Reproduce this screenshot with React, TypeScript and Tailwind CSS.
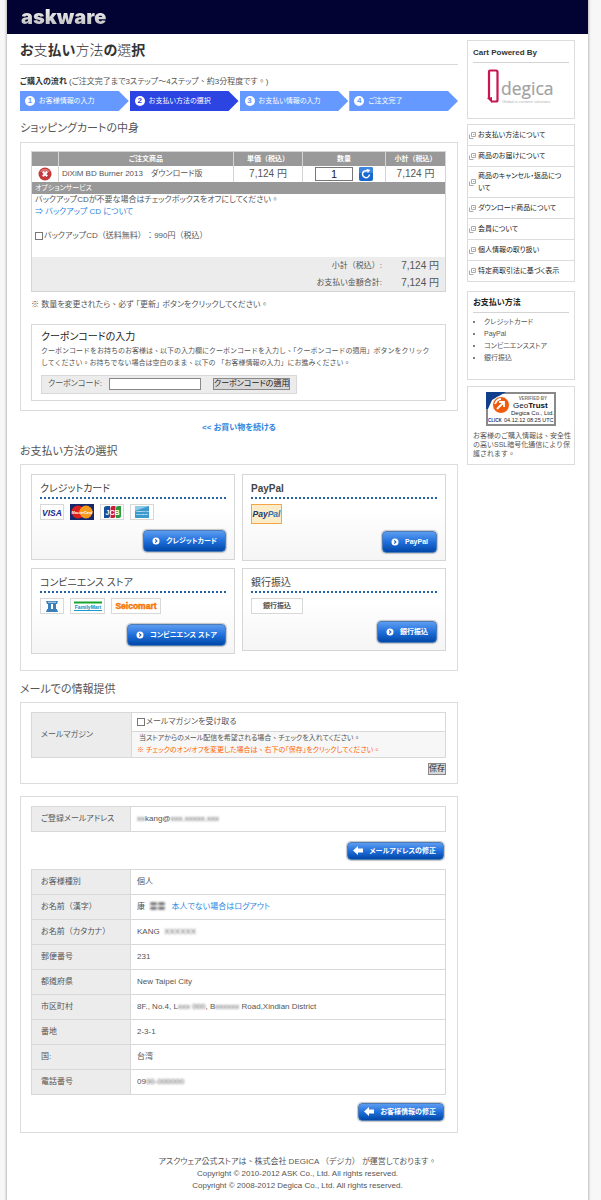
import React, { useState } from "react";
import clsx from "clsx";

const steps = ["お客様情報の入力", "お支払い方法の選択", "お支払い情報の入力", "ご注文完了"];

const guideLinks = [
  "お支払い方法について",
  "商品のお届けについて",
  "商品のキャンセル・返品について",
  "ダウンロード商品について",
  "会員について",
  "個人情報の取り扱い",
  "特定商取引法に基づく表示",
];

const customerRows: { label: string; value: React.ReactNode }[] = [
  { label: "お客様種別", value: "個人" },
  {
    label: "お名前（漢字）",
    value: (
      <>
        康 &nbsp;<Masked>〓〓</Masked>
        <a href="#logout" className="ml-[6px] text-[#2f86e0]">
          本人でない場合はログアウト
        </a>
      </>
    ),
  },
  { label: "お名前（カタカナ）", value: <>KANG &nbsp;<Masked>XXXXXX</Masked></> },
  { label: "郵便番号", value: "231" },
  { label: "都道府県", value: "New Taipei City" },
  {
    label: "市区町村",
    value: (
      <>
        8F., No.4, L<Masked>xxx 000</Masked>, B<Masked>xxxxxx</Masked> Road,Xindian District
      </>
    ),
  },
  { label: "番地", value: "2-3-1" },
  { label: "国:", value: "台湾" },
  { label: "電話番号", value: <>09<Masked>00-000000</Masked></> },
];

// private values stay unreadable
function Masked({ children }: { children: React.ReactNode }) {
  return <span className="select-none blur-[1px]">{children}</span>;
}

// kana is set proportionally, punctuation and brackets keep the full width
function Jp({ children }: { children: string }) {
  return (
    <>
      {children.split(/([、。（）])/).map((part, i) =>
        i % 2 ? (
          <span key={i} className="[font-feature-settings:normal]">{part}</span>
        ) : (
          part
        )
      )}
    </>
  );
}

function Panel({ className, children }: { className?: string; children: React.ReactNode }) {
  return <section className={clsx("border border-[#dcdcdc] pl-[10px] pr-[11px]", className)}>{children}</section>;
}

function SectionTitle({ className, children }: { className?: string; children: React.ReactNode }) {
  return <h2 className={clsx("text-[11px] leading-4 text-[#555]", className)}>{children}</h2>;
}

function BlueButton({ back, children }: { back?: boolean; children: React.ReactNode }) {
  return (
    <button
      type="button"
      className={clsx(
        "flex items-center whitespace-nowrap rounded border border-[#4b7cb8] bg-linear-to-b from-[#5b9cf0] via-[#1f6fdc] to-[#0148a8] text-[7px] font-bold text-white shadow-[0_0_1px_1px_#c4c4c4]",
        back ? "h-[18px] gap-[6px] pl-[5px] pr-[7px]" : "h-[22px] gap-[6px] pl-2 pr-2"
      )}
    >
      {back ? (
        <svg className="h-[9px] w-[10px]" viewBox="0 0 10 9" fill="#fff">
          <path d="M0 4.5 5 0v2.5h5v4H5V9z" />
        </svg>
      ) : (
        <svg className="h-2 w-2" viewBox="0 0 8 8">
          <circle cx="4" cy="4" r="3.5" fill="#fff" />
          <path d="m3.2 2.3 1.7 1.7-1.7 1.7" fill="none" stroke="#1f5fc0" strokeWidth="1.1" />
        </svg>
      )}
      <span>{children}</span>
    </button>
  );
}

function PayCard({ title, bold, icons, button, tight }: { title: string; bold?: boolean; icons: React.ReactNode; button: string; tight?: boolean }) {
  return (
    <div className="border border-[#d6d6d6] bg-linear-to-b from-white from-40% to-[#f5f5f5] px-2 pb-[7px] pt-[5px]">
      <h3 className={clsx("h-[19px] border-b-2 border-dotted border-[#2563a5] text-[10px] leading-[17px] text-[#444]", bold && "font-bold")}>
        {title}
      </h3>
      <div className="mt-[5px] flex items-start gap-[6px]">{icons}</div>
      <div className={clsx("flex justify-end", tight ? "mt-[7px]" : "mt-[10px]")}>
        <BlueButton>{button}</BlueButton>
      </div>
    </div>
  );
}

function Badge({ className, children }: { className?: string; children: React.ReactNode }) {
  return <span className={clsx("flex h-4 items-center justify-center border border-[#d8d8d8] bg-white", className)}>{children}</span>;
}

function CardLogos() {
  return (
    <>
      <Badge className="w-6">
        <svg className="h-[14px] w-[22px]" viewBox="0 0 22 14">
          <text x="11" y="10.5" textAnchor="middle" fontFamily="Liberation Sans" fontSize="8.5" fontWeight="bold" fontStyle="italic" fill="#1b2a8c">VISA</text>
        </svg>
      </Badge>
      <svg className="h-4 w-6" viewBox="0 0 24 16">
        <rect width="24" height="16" fill="#17296b" />
        <circle cx="8" cy="8" r="6.5" fill="#dc1f1f" />
        <circle cx="16" cy="8" r="6.5" fill="#f79a1c" />
        <text x="12" y="9.5" textAnchor="middle" fontFamily="Liberation Sans" fontSize="3.8" fontWeight="bold" fontStyle="italic" fill="#fff">MasterCard</text>
      </svg>
      <Badge className="w-6">
        <svg className="h-[14px] w-[18px]" viewBox="0 0 18 14">
          <path d="M4 1h3v10q0 2-2 2H1V3q0-2 3-2" fill="#16509b" />
          <path d="M9.800 1h2.700v10q0 2-2 2H7.500V3q0-2 2.300-2" fill="#c71f37" />
          <path d="M15 1h3v10q0 2-2 2h-3V3q0-2 2-2" fill="#2a9a3c" />
          <text x="9.5" y="9.500" textAnchor="middle" fontFamily="Liberation Sans" fontSize="7" fontWeight="bold" fill="#fff">JCB</text>
        </svg>
      </Badge>
      <Badge className="w-6">
        <svg className="h-[14px] w-[14px]" viewBox="0 0 14 14">
          <rect x="0" y="1" width="14" height="12" fill="#3c9bce" />
          <path d="M0 1h14L0 6z" fill="#8fcbe6" />
          <text x="7" y="7" textAnchor="middle" fontFamily="Liberation Sans" fontSize="2.400" fontWeight="bold" fill="#fff">AMERICAN</text>
          <text x="7" y="10" textAnchor="middle" fontFamily="Liberation Sans" fontSize="2.400" fontWeight="bold" fill="#fff">EXPRESS</text>
        </svg>
      </Badge>
    </>
  );
}

function StoreLogos() {
  return (
    <>
      <Badge className="w-6">
        <svg className="h-3 w-[14px]" viewBox="0 0 14 12">
          <path d="M1 1h12l-1 3H2zM3 4h3v5H3zM8 4h3v5H8zM2 9h10l1 3H1z" fill="#3a7fb8" />
          <path d="M3 2.300h8" stroke="#b6d8ee" />
        </svg>
      </Badge>
      <Badge className="w-[35px]">
        <svg className="h-[14px] w-[30px]" viewBox="0 0 30 14">
          <path d="M1 3.500h28" stroke="#18a32c" strokeWidth="2" />
          <path d="M1 11.500h28" stroke="#1a9bc9" />
          <text x="15" y="9.500" textAnchor="middle" fontFamily="Liberation Sans" fontSize="5" fontWeight="bold" fill="#118bbb">FamilyMart</text>
        </svg>
      </Badge>
      <Badge className="w-[50px]">
        <svg className="h-[14px] w-[46px]" viewBox="0 0 46 14">
          <text x="23" y="10" textAnchor="middle" fontFamily="Liberation Sans" fontSize="8.500" fontWeight="bold" fill="#f47a0c" stroke="#f47a0c" strokeWidth=".5">Seicomart</text>
        </svg>
      </Badge>
    </>
  );
}

function DegicaLogo() {
  return (
    <svg className="mx-auto mt-[6px] h-[36px] w-[70px]" viewBox="0 0 70 36" role="img" aria-label="degica">
      <path d="M3 30V2.500q0-1 1-1h6q1.500 0 1.500 1.500v28q0 1.500-1.500 1.500H5.500" fill="none" stroke="#c8164f" strokeWidth="2.200" />
      <path d="m1 29 5 5V28z" fill="#c8164f" />
      <text x="15" y="26" fontFamily="Open Sans" fontSize="17.500" fill="#a2a2a2" stroke="#a2a2a2" strokeWidth=".2">degica</text>
      <text x="16" y="34" fontFamily="Liberation Sans" fontSize="4.200" fill="#b5b5b5">Global e-content solutions</text>
    </svg>
  );
}

function GeoTrustSeal() {
  return (
    <svg className="mx-auto h-[34px] w-[70px]" viewBox="0 0 70 34" fontFamily="Liberation Sans" role="img" aria-label="GeoTrust">
      <rect x="1" y="1" width="68" height="32" fill="#fff" stroke="#8a8a8a" strokeWidth="2" />
      <path d="M0 0h20L6 8 2 17H0z" fill="#123f8c" />
      <circle cx="15" cy="13" r="8.500" fill="#ef5b0c" stroke="#fff" />
      <path d="m11 17 6-6m-4-1h5v5M9 12q2-5 6-5" fill="none" stroke="#fff" strokeWidth="1.800" />
      <text x="47" y="8" textAnchor="middle" fontSize="4.500" fontWeight="bold" fill="#777">VERIFIED BY</text>
      <text x="27" y="15.500" fontSize="8" fill="#111">Geo<tspan fontWeight="bold">Trust</tspan></text>
      <text x="25" y="23" fontSize="6" fill="#222">Degica Co., Ltd.</text>
      <text x="2" y="29.500" fontSize="4.500" fontWeight="bold" fill="#123f8c">CLICK</text>
      <text x="18" y="29.500" fontSize="5.500" fill="#222">04.12.12 08:25 UTC</text>
    </svg>
  );
}

function CartTable() {
  const [qty, setQty] = useState("1");
  return (
    <table className="w-full table-fixed border-collapse border border-[#d4d4d4]">
      <colgroup>
        <col className="w-[27px]" />
        <col />
        <col className="w-[69px]" />
        <col className="w-[83px]" />
        <col className="w-[60px]" />
      </colgroup>
      <thead>
        <tr className="h-[14px] bg-[#999] text-center text-[7px] leading-3 text-white">
          <th className="border-r border-[#d4d4d4]" />
          <th className="border-r border-[#d4d4d4]">ご注文商品</th>
          <th className="border-r border-[#d4d4d4]"><Jp>単価（税込）</Jp></th>
          <th className="border-r border-[#d4d4d4]">数量</th>
          <th><Jp>小計（税込）</Jp></th>
        </tr>
      </thead>
      <tbody>
        <tr className="h-4 text-center">
          <td className="border-r border-[#d4d4d4]">
            <button type="button" aria-label="削除" className="mx-auto block">
              <svg className="h-[14px] w-[14px]" viewBox="0 0 14 14">
                <circle cx="7" cy="7" r="6.500" fill="#c4373a" />
                <path d="M2 5a5.500 5.500 0 0 1 10 0z" fill="#da7472" />
                <path d="m4.800 4.800 4.400 4.400m0-4.400L4.800 9.200" stroke="#fff" strokeWidth="2" />
              </svg>
            </button>
          </td>
          <td className="border-r border-[#d4d4d4] pl-[3px] text-left">DiXiM BD Burner 2013　ダウンロード版</td>
          <td className="border-r border-[#d4d4d4] text-[10px] leading-[14px]">7,124 円</td>
          <td className="border-r border-[#d4d4d4]">
            <div className="flex items-center justify-center gap-[6px]">
              <input
                aria-label="数量"
                value={qty}
                onChange={(e) => setQty(e.target.value)}
                className="h-[14px] w-[38px] border border-[#777] text-center text-[11px] text-[#222]"
              />
              <button type="button" aria-label="更新">
                <svg className="h-[14px] w-[14px]" viewBox="0 0 14 14">
                  <rect width="14" height="14" rx="2" fill="#1767cf" />
                  <path d="M0 2q0-2 2-2h10q2 0 2 2v4H0z" fill="#3d86e0" />
                  <path d="M10.500 7.500A3.500 3.500 0 1 1 8.500 4" fill="none" stroke="#fff" strokeWidth="1.500" />
                  <path d="M7.500 1.800 11.300 3l-2.500 3z" fill="#fff" />
                </svg>
              </button>
            </div>
          </td>
          <td className="text-[10px] leading-[14px]">7,124 円</td>
        </tr>
        <tr className="h-3 bg-[#999] text-[7px] leading-[10px] text-white">
          <td colSpan={5} className="pl-[3px]">オプションサービス</td>
        </tr>
        <tr className="h-[63px] align-top">
          <td colSpan={5} className="pl-[3px]">
            <p><Jp>バックアップCDが不要な場合はチェックボックスをオフにしてください。</Jp></p>
            <a href="#backup" className="text-[#2f86e0]">⇒ バックアップ CD について</a>
            <label className="mt-3 flex items-center gap-px">
              <input type="checkbox" className="h-2 w-2 appearance-none border border-[#777] bg-white" />
              <span><Jp>バックアップCD（送料無料） ： 990円（税込）</Jp></span>
            </label>
          </td>
        </tr>
        <tr className="bg-[#ececec]">
          <td colSpan={5} className="pr-[6px]">
            <dl className="grid grid-cols-[1fr_57px] text-right leading-[17px]">
              <dt><Jp>小計（税込）:</Jp></dt>
              <dd className="text-[10px]">7,124 円</dd>
              <dt>お支払い金額合計:</dt>
              <dd className="text-[10px]">7,124 円</dd>
            </dl>
          </td>
        </tr>
      </tbody>
    </table>
  );
}

function Sidebar() {
  return (
    <aside className="pt-[6px]">
      <div className="h-[79px] border border-[#dcdcdc] px-[5px] pt-[6px]">
        <h2 className="border-b border-[#d4d4d4] pb-[3px] font-bold text-[#333]">Cart Powered By</h2>
        <DegicaLogo />
      </div>
      <ul className="mt-[5px] border border-b-0 border-[#dcdcdc] text-[7px] text-[#222]">
        {guideLinks.map((label) => (
          <li key={label} className="border-b border-[#dcdcdc]">
            <a href="#guide" className="flex min-h-[20px] items-center gap-[2px] py-[3px] pl-px pr-[10px]">
              <svg className="h-[7px] w-[7px] shrink-0" viewBox="0 0 7 7" fill="none" stroke="#aaa">
                <path d="M2.500.5h4v4h-4zM.5 2.500v4h4M4 2.500h1.500" />
              </svg>
              <span>{label}</span>
            </a>
          </li>
        ))}
      </ul>
      <div className="mt-[9px] h-[89px] border border-[#dcdcdc] px-[5px] pt-[5px]">
        <h2 className="mb-[3px] border-b border-[#d4d4d4] pb-[3px] font-bold text-[#222]">お支払い方法</h2>
        <ul className="list-disc pl-[11px] text-[7px] leading-3">
          <li>クレジットカード</li>
          <li>PayPal</li>
          <li>コンビニエンスストア</li>
          <li>銀行振込</li>
        </ul>
      </div>
      <div className="mt-[6px] border border-[#dcdcdc] pb-[6px] pt-[5px]">
        <GeoTrustSeal />
        <p className="mt-[5px] pl-[5px] pr-px text-[7px] leading-[9px] [font-feature-settings:normal]">
          お客様のご購入情報は、安全性の高いSSL暗号化通信により保護されます。
        </p>
      </div>
    </aside>
  );
}

export default function App() {
  return (
    <div className="bg-[#f7f7f7] pl-[7px] pr-[13px] font-['Liberation_Sans','Noto_Sans_CJK_TC',sans-serif] text-[8px] leading-3 text-[#555] [font-feature-settings:'palt']">
      <div className="bg-white pb-2 shadow-[0_0_2px_1px_#bbb]">
        <header className="flex h-[34px] items-center bg-[#020233] pl-[14px]">
          <a href="#top" className="bg-linear-to-b from-white to-[#b5b5b5] bg-clip-text font-['Inter','Liberation_Sans',sans-serif] text-[20px] font-black leading-6 text-transparent">
            askware
          </a>
        </header>

        <div className="grid grid-cols-[minmax(0,1fr)_108px] gap-[9px] px-[13px]">
          <main>
            <h1 className="border-b border-[#d8d8d8] pb-[4px] pt-[7px] text-[14px] font-bold leading-[19px] text-[#333]">
              お<span className="font-light">支</span>払い<span className="font-light">方法</span>の<span className="font-light">選</span>択
            </h1>
            <p className="mt-[11px]">
              <strong className="text-[#333]">ご購入の流れ</strong> <Jp>(ご注文完了まで3ステップ～4ステップ、約3分程度です。)</Jp>
            </p>
            <ol className="mt-[3px] grid grid-cols-4 gap-px text-[7px] text-white">
              {steps.map((step, i) => (
                <li
                  key={step}
                  className={clsx(
                    "flex h-5 items-center gap-1 pl-[5px] [clip-path:polygon(0_0,calc(100%-10px)_0,100%_50%,calc(100%-10px)_100%,0_100%)]",
                    i === 1 ? "bg-[#2b44e2]" : "bg-[#6699ff]"
                  )}
                >
                  <span className={clsx("flex h-[10px] w-[10px] items-center justify-center rounded-full bg-white text-[8px] font-bold", i === 1 ? "text-[#2b44e2]" : "text-[#6699ff]")}>
                    {i + 1}
                  </span>
                  {step}
                </li>
              ))}
            </ol>

            <SectionTitle className="mt-[9px]">ショッピングカートの中身</SectionTitle>
            <Panel className="mt-[6px] pb-[9px] pt-2">
              <CartTable />
              <p className="mt-[7px]"><Jp>※ 数量を変更されたら、必ず 「更新」 ボタンをクリックしてください。</Jp></p>
              <div className="mt-[13px] border border-[#d8d8d8] px-[9px] pb-[6px] pt-1">
                <h3 className="text-[10px] leading-4 text-[#222]">クーポンコードの入力</h3>
                <p className="text-[7px] [font-feature-settings:normal]">
                  クーポンコードをお持ちのお客様は、以下の入力欄にクーポンコードを入力し、「クーポンコードの適用」ボタンをクリックしてください。お持ちでない場合は空白のまま、以下の 「お客様情報の入力」にお進みください。
                </p>
                <div className="mt-[6px] flex h-[19px] w-fit items-center border border-[#d8d8d8] bg-[#ececec] px-[6px]">
                  <label htmlFor="coupon" className="w-[61px]">クーポンコード:</label>
                  <input id="coupon" className="h-3 w-[92px] border border-[#888] bg-white" />
                  <button type="button" className="ml-3 h-3 border border-[#888] bg-[#d8d8d8] leading-[10px] text-[#222]">
                    クーポンコードの適用
                  </button>
                </div>
              </div>
            </Panel>
            <p className="mt-[11px] text-center">
              <a href="#shop" className="font-bold text-[#2f86e0]">&lt;&lt; お買い物を続ける</a>
            </p>

            <SectionTitle className="mt-[9px]">お支払い方法の選択</SectionTitle>
            <Panel className="mt-[5px] pb-4 pt-[9px]">
              <div className="grid grid-cols-2 items-start gap-x-[7px] gap-y-[7px]">
                <PayCard title="クレジットカード" button="クレジットカード" icons={<CardLogos />} />
                <PayCard
                  title="PayPal"
                  bold
                  button="PayPal"
                  tight
                  icons={
                    <svg className="h-5 w-[31px]" viewBox="0 0 31 20">
                      <rect x=".5" y=".5" width="30" height="19" fill="#fdecc8" stroke="#f5a547" />
                      <text x="15.500" y="12.500" textAnchor="middle" fontFamily="Liberation Sans" fontSize="8.500" fontWeight="bold" fontStyle="italic" fill="#1b3668">
                        Pay<tspan fill="#2a75ae">Pal</tspan>
                      </text>
                    </svg>
                  }
                />
                <PayCard title="コンビニエンス ストア" button="コンビニエンス ストア" icons={<StoreLogos />} />
                <PayCard title="銀行振込" button="銀行振込" tight icons={<Badge className="w-[52px] text-[7px] font-bold">銀行振込</Badge>} />
              </div>
            </Panel>

            <SectionTitle className="mt-[10px]">メールでの情報提供</SectionTitle>
            <Panel className="mt-[5px] pb-[8px] pt-[9px]">
              <table className="w-full table-fixed border-collapse">
                <tbody>
                  <tr className="h-[19px]">
                    <th rowSpan={2} scope="row" className="w-[100px] border border-[#d8d8d8] bg-[#ececec] pl-[9px] text-left font-normal">
                      メールマガジン
                    </th>
                    <td className="border border-[#d8d8d8] pl-[5px]">
                      <label className="flex items-center gap-px">
                        <input type="checkbox" className="h-2 w-2 appearance-none border border-[#777] bg-white" />
                        メールマガジンを受け取る
                      </label>
                    </td>
                  </tr>
                  <tr className="h-[26px]">
                    <td className="border border-[#d8d8d8] bg-[#f7f7f7] pl-[5px] text-[7px]">
                      <p className="pl-[2px]"><Jp>当ストアからのメール配信を希望される場合、チェックを入れてください。</Jp></p>
                      <p className="text-[#ff6600]"><Jp>※ チェックのオン/オフを変更した場合は、右下の「保存」をクリックしてください。</Jp></p>
                    </td>
                  </tr>
                </tbody>
              </table>
              <div className="mt-[5px] flex justify-end">
                <button type="button" className="h-3 border border-[#888] bg-[#d8d8d8] leading-[10px] text-[#222]">保存</button>
              </div>
            </Panel>

            <Panel className="mt-3 pb-[11px] pt-[9px]">
              <table className="w-full table-fixed border-collapse">
                <tbody>
                  <tr className="h-[25px]">
                    <th scope="row" className="w-[99px] border border-[#d8d8d8] bg-[#ececec] pl-[9px] text-left font-normal">ご登録メールアドレス</th>
                    <td className="border border-[#d8d8d8] pl-[6px]">
                      <Masked>xx</Masked>kang@<Masked>xxx.xxxxx.xxx</Masked>
                    </td>
                  </tr>
                </tbody>
              </table>
              <div className="mt-[10px] flex justify-end pr-[2px]">
                <BlueButton back>メールアドレスの修正</BlueButton>
              </div>
              <table className="mt-[9px] w-full table-fixed border-collapse">
                <tbody>
                  {customerRows.map((row) => (
                    <tr key={row.label} className="h-[25px]">
                      <th scope="row" className="w-[99px] border border-[#d8d8d8] bg-[#ececec] pl-[9px] text-left font-normal">
                        <Jp>{row.label}</Jp>
                      </th>
                      <td className="border border-[#d8d8d8] pl-[6px]">{row.value}</td>
                    </tr>
                  ))}
                </tbody>
              </table>
              <div className="mt-2 flex justify-end pr-[2px]">
                <BlueButton back>お客様情報の修正</BlueButton>
              </div>
            </Panel>
          </main>
          <Sidebar />
        </div>

        <footer className="mt-[23px] text-center">
          <p><Jp>アスクウェア公式ストアは、株式会社 DEGICA （デジカ） が運営しております。</Jp></p>
          <p>Copyright © 2010-2012 ASK Co., Ltd. All rights reserved.</p>
          <p>Copyright © 2008-2012 Degica Co., Ltd. All rights reserved.</p>
        </footer>
      </div>
    </div>
  );
}
